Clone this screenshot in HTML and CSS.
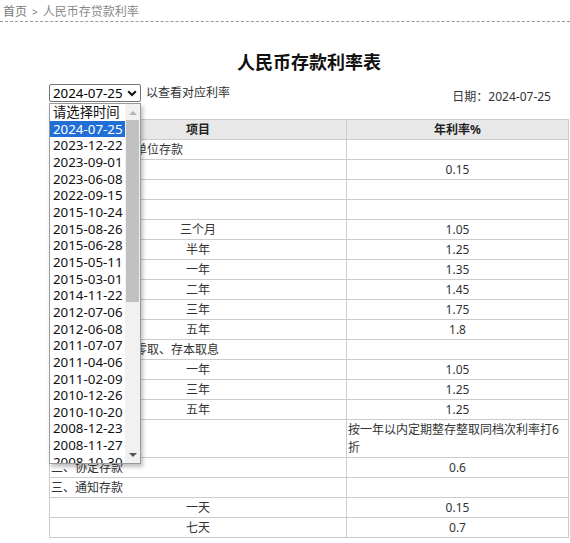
FILE: index.html
```html
<!DOCTYPE html>
<html lang="zh-CN">
<head>
<meta charset="utf-8">
<title>人民币存款利率表</title>
<link rel="stylesheet" href="styles.css">
</head>
<body>
<div class="crumb"><span class="crumb-home">首页</span><span class="crumb-sep">&gt;</span><span class="crumb-cur">人民币存贷款利率</span></div>
<div class="main">
  <h1 class="title">人民币存款利率表</h1>
  <div class="toolbar">
    <div class="pick">
      <div class="sel-wrap">
        <div class="sel-box"><span class="sel-text">2024-07-25</span><svg class="sel-chev" width="10" height="7" viewBox="0 0 10 7"><path d="M1.2 1.3 L5 5 L8.8 1.3" fill="none" stroke="#111" stroke-width="2"/></svg></div>
        <div class="dropdown">
          <div class="opts">
            <div class="opt">请选择时间</div>
            <div class="opt opt-on">2024-07-25</div>
            <div class="opt">2023-12-22</div>
            <div class="opt">2023-09-01</div>
            <div class="opt">2023-06-08</div>
            <div class="opt">2022-09-15</div>
            <div class="opt">2015-10-24</div>
            <div class="opt">2015-08-26</div>
            <div class="opt">2015-06-28</div>
            <div class="opt">2015-05-11</div>
            <div class="opt">2015-03-01</div>
            <div class="opt">2014-11-22</div>
            <div class="opt">2012-07-06</div>
            <div class="opt">2012-06-08</div>
            <div class="opt">2011-07-07</div>
            <div class="opt">2011-04-06</div>
            <div class="opt">2011-02-09</div>
            <div class="opt">2010-12-26</div>
            <div class="opt">2010-10-20</div>
            <div class="opt">2008-12-23</div>
            <div class="opt">2008-11-27</div>
            <div class="opt">2008-10-30</div>
            <div class="opt">2008-10-09</div>
          </div>
          <div class="sbar">
            <div class="sbtn"><svg width="8" height="5" viewBox="0 0 8 5"><path d="M0 5 L4 1 L8 5 Z" fill="#b4b4b4"/></svg></div>
            <div class="strack"><div class="sthumb"></div></div>
            <div class="sbtn"><svg width="8" height="5" viewBox="0 0 8 5"><path d="M0 0 L4 4 L8 0 Z" fill="#555"/></svg></div>
          </div>
        </div>
      </div>
      <span class="hint">以查看对应利率</span>
    </div>
    <div class="date">日期：2024-07-25</div>
  </div>
  <table class="rates">
    <thead>
      <tr><th class="c1">项目</th><th>年利率%</th></tr>
    </thead>
    <tbody>
      <tr><td class="l">一、城乡居民及单位存款</td><td></td></tr>
      <tr><td class="l">（一）活期</td><td>0.15</td></tr>
      <tr><td class="l">（二）定期</td><td></td></tr>
      <tr><td class="l">1、整存整取</td><td></td></tr>
      <tr><td>三个月</td><td>1.05</td></tr>
      <tr><td>半年</td><td>1.25</td></tr>
      <tr><td>一年</td><td>1.35</td></tr>
      <tr><td>二年</td><td>1.45</td></tr>
      <tr><td>三年</td><td>1.75</td></tr>
      <tr><td>五年</td><td>1.8</td></tr>
      <tr><td class="l">零存整取、整存零取、存本取息</td><td></td></tr>
      <tr><td>一年</td><td>1.05</td></tr>
      <tr><td>三年</td><td>1.25</td></tr>
      <tr><td>五年</td><td>1.25</td></tr>
      <tr><td class="l">3、定活两便</td><td class="l">按一年以内定期整存整取同档次利率打6折</td></tr>
      <tr><td class="l">二、协定存款</td><td>0.6</td></tr>
      <tr><td class="l">三、通知存款</td><td></td></tr>
      <tr><td>一天</td><td>0.15</td></tr>
      <tr><td>七天</td><td>0.7</td></tr>
    </tbody>
  </table>
</div>
</body>
</html>
```
FILE: styles.css
```css
html, body {
  margin: 0;
  padding: 0;
  background: #fff;
}
body {
  font-family: "Noto Sans", "Noto Sans CJK SC", sans-serif;
  font-size: 12px;
  color: #333;
  width: 570px;
  overflow: hidden;
}
.crumb {
  padding: 3px 0 0 3px;
  line-height: 18px;
  height: 18px;
  color: #888;
  border-bottom: 1px dashed #999;
}
.crumb-home {
  color: #777;
}
.crumb-sep {
  font-size: 10px;
  margin: 0 5px 0 5px;
  color: #777;
}
.main {
  margin-left: 49px;
  width: 520px;
}
.title {
  margin: 28px 0 10px;
  font-size: 18px;
  line-height: 24px;
  font-weight: bold;
  color: #111;
  text-align: center;
}
.toolbar {
  display: flex;
  justify-content: space-between;
  align-items: flex-start;
  height: 22px;
}
.pick {
  display: flex;
  align-items: center;
}
.sel-wrap {
  position: relative;
  width: 92px;
  height: 18px;
}
.sel-box {
  box-sizing: border-box;
  width: 92px;
  height: 18px;
  border: 1px solid #767676;
  border-radius: 2px;
  display: flex;
  align-items: center;
  justify-content: space-between;
  padding: 0 3px 0 3px;
  font-size: 13.33px;
  line-height: 16px;
  color: #000;
  background: #fff;
}
.sel-chev {
  display: block;
}
.hint {
  margin-left: 5px;
  line-height: 18px;
  color: #333;
}
.date {
  margin-top: 4px;
  margin-right: 18px;
  line-height: 18px;
  color: #333;
}
.dropdown {
  position: absolute;
  left: 0;
  top: 19px;
  width: 92px;
  height: 361px;
  box-sizing: border-box;
  border: 1px solid #9a9a9a;
  background: #fff;
  box-shadow: 2px 3px 4px rgba(0, 0, 0, 0.25);
  display: flex;
  z-index: 5;
}
.opts {
  flex: 1;
  overflow: hidden;
}
.opt {
  padding-left: 3px;
  font-size: 13.33px;
  line-height: 16.67px;
  height: 16.67px;
  white-space: nowrap;
  color: #111;
}
.opt-on {
  background: #1f6fd7;
  color: #fff;
}
.sbar {
  width: 15px;
  background: #f1f1f1;
  display: flex;
  flex-direction: column;
}
.sbtn {
  height: 16px;
  display: flex;
  align-items: center;
  justify-content: center;
}
.strack {
  flex: 1;
}
.sthumb {
  margin: 0 1px;
  height: 182px;
  background: #c1c1c1;
}
.rates {
  margin-top: 13px;
  width: 520px;
  border-collapse: collapse;
  border: 1px solid #ccc;
  table-layout: fixed;
}
.rates th, .rates td {
  border: 1px solid #ccc;
  padding: 1px 1px 0;
  line-height: 18px;
  text-align: center;
  vertical-align: middle;
  font-size: 12px;
}
.rates th {
  background: #e8e8e8;
  font-weight: bold;
  color: #222;
}
.rates th.c1 {
  width: 294px;
}
.rates td {
  color: #333;
}
.rates td.l {
  text-align: left;
}
```
